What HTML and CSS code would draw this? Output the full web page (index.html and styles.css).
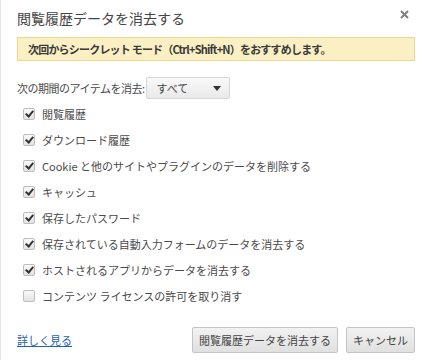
FILE: index.html
```html
<!DOCTYPE html>
<html lang="ja">
<head>
    <meta charset="UTF-8">
    <title>閲覧履歴データを消去する</title>
    <link rel="stylesheet" href="styles.css">
</head>
<body>
    <div class="dialog">
        <div class="title-row">
            <span class="title">閲覧履歴データを消去する</span>
            <span class="close">
                <svg width="9" height="9" viewBox="0 0 9 9"><path d="M1 1L8 8M8 1L1 8" stroke="#808080" stroke-width="2"/></svg>
            </span>
        </div>

        <div class="notice">次回からシークレット モード（Ctrl+Shift+N）をおすすめします。</div>

        <div class="period">
            <span class="period-label">次の期間のアイテムを消去:</span>
            <div class="select">
                <span>すべて</span>
                <span class="arrow"></span>
            </div>
        </div>

        <div class="options">
            <div class="option"><span class="box checked"></span>閲覧履歴</div>
            <div class="option"><span class="box checked"></span>ダウンロード履歴</div>
            <div class="option"><span class="box checked"></span>Cookie と他のサイトやプラグインのデータを削除する</div>
            <div class="option"><span class="box checked"></span>キャッシュ</div>
            <div class="option"><span class="box checked"></span>保存したパスワード</div>
            <div class="option"><span class="box checked"></span>保存されている自動入力フォームのデータを消去する</div>
            <div class="option"><span class="box checked"></span>ホストされるアプリからデータを消去する</div>
            <div class="option"><span class="box"></span>コンテンツ ライセンスの許可を取り消す</div>
        </div>

        <div class="footer">
            <a href="#" class="more">詳しく見る</a>
            <div class="buttons">
                <button>閲覧履歴データを消去する</button>
                <button>キャンセル</button>
            </div>
        </div>
    </div>
</body>
</html>
```

FILE: styles.css
```css
body {
    margin: 0;
    background-color: #fff;
    color: #4a4a4a;
    font-family: "Noto Sans CJK JP", "Liberation Sans", sans-serif;
    font-size: 11px;
}

.dialog {
    height: 360px;
    box-sizing: border-box;
    padding: 8px 17px 0 16px;
    border-left: 2px solid #e4e4e4;
    margin-left: -1px;
}

.title-row {
    display: flex;
    justify-content: space-between;
    align-items: center;
    height: 20px;
    margin-bottom: 9px;
}

.title {
    font-size: 14px;
    color: #444;
}

.close {
    display: flex;
    margin-right: 6px;
    margin-top: -7px;
}

.notice {
    height: 24px;
    box-sizing: border-box;
    line-height: 22px;
    padding: 0 10px;
    background-color: #fbf0c4;
    border: 1px solid #ecd98e;
    font-weight: bold;
    color: #3a3a3a;
    letter-spacing: -0.8px;
}

.period {
    display: flex;
    align-items: center;
    margin-top: 16px;
    height: 22px;
}

.period-label {
    letter-spacing: -0.5px;
}

.select {
    display: flex;
    align-items: center;
    justify-content: space-between;
    width: 84px;
    height: 22px;
    box-sizing: border-box;
    margin-left: 2px;
    padding: 0 8px 0 9px;
    border: 1px solid #d6d6d6;
    border-radius: 2px;
    background: linear-gradient(#f9f9f9, #e9e9e9);
    color: #444;
}

.arrow {
    width: 0;
    height: 0;
    border-left: 4px solid transparent;
    border-right: 4px solid transparent;
    border-top: 5px solid #333;
}

.options {
    margin-top: 2px;
}

.option {
    display: flex;
    align-items: center;
    height: 26px;
    padding-left: 6px;
}

.box {
    width: 12px;
    height: 12px;
    box-sizing: border-box;
    margin-right: 7px;
    border: 1px solid #bdbdbd;
    border-radius: 2px;
    background: linear-gradient(#fafafa, #e2e2e2);
    position: relative;
}

.box.checked::after {
    content: "";
    position: absolute;
    left: 3px;
    top: 0px;
    width: 3px;
    height: 6px;
    border-right: 2px solid #333;
    border-bottom: 2px solid #333;
    transform: rotate(40deg);
}

.footer {
    display: flex;
    justify-content: space-between;
    align-items: center;
    margin-top: 18px;
}

.more {
    color: #1e5fbf;
    text-decoration: underline;
}

.buttons {
    display: flex;
    gap: 8px;
}

button {
    height: 26px;
    padding: 0 6px;
    border: 1px solid #c4c4c4;
    border-radius: 2px;
    background: linear-gradient(#f2f2f2, #e0e0e0);
    color: #444;
    font-family: inherit;
    font-size: 11px;
}
```
